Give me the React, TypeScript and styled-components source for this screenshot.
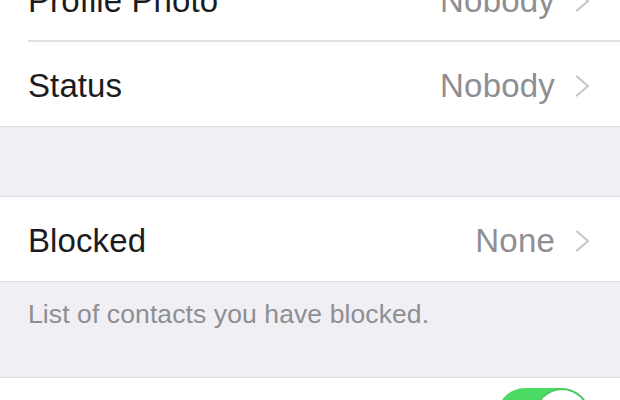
import React from "react";
import styled, { createGlobalStyle } from "styled-components";

const GlobalStyle = createGlobalStyle`
  html, body {
    margin: 0;
    padding: 0;
    background: #efeff4;
    overflow: hidden;
  }
  body {
    font-family: "Liberation Sans", Arial, sans-serif;
    -webkit-font-smoothing: antialiased;
  }
`;

const Screen = styled.div`
  width: 620px;
  height: 400px;
  overflow: hidden;
  background: #efeff4;
`;

const Group = styled.div<{ $first?: boolean }>`
  background: #ffffff;
  margin-top: ${(p) => (p.$first ? "-42px" : "0")};
  border-top: ${(p) => (p.$first ? "none" : "1px solid #dedee2")};
  border-bottom: 1px solid #dedee2;
`;

const Spacer = styled.div<{ $height: number }>`
  height: ${(p) => p.$height}px;
`;

const Row = styled.div<{ $divider?: boolean }>`
  height: 84px;
  display: flex;
  align-items: center;
  margin-left: 28px;
  padding: 3px 30px 0 0;
  border-bottom: ${(p) => (p.$divider ? "2px solid #e3e3e6" : "none")};
  box-sizing: border-box;
`;

const Label = styled.span`
  flex: 1;
  font-size: 33px;
  color: #1c1c1e;
  letter-spacing: 0.1px;
`;

const Value = styled.span`
  font-size: 33px;
  color: #8e8e93;
  letter-spacing: 0.2px;
`;

const Chevron = styled.svg`
  width: 15px;
  height: 22px;
  margin-left: 20px;
  margin-top: 1px;
`;

const Footer = styled.div`
  padding: 17px 0 0 28px;
  height: 95px;
  box-sizing: border-box;
  font-size: 26.5px;
  color: #8e8e93;
  letter-spacing: 0.1px;
`;

const Toggle = styled.div<{ $on: boolean }>`
  margin-left: auto;
  margin-top: 7px;
  align-self: flex-start;
  width: 93px;
  height: 56px;
  border-radius: 28px;
  background: ${(p) => (p.$on ? "#4cd964" : "#e5e5ea")};
  position: relative;
  &::after {
    content: "";
    position: absolute;
    top: 2px;
    left: ${(p) => (p.$on ? "39px" : "2px")};
    width: 52px;
    height: 52px;
    border-radius: 50%;
    background: #ffffff;
    box-shadow: 0 0 0 1px rgba(0, 0, 0, 0.08), 0 2px 5px rgba(0, 0, 0, 0.2);
  }
`;

const Arrow = () => (
  <Chevron viewBox="0 0 15 22">
    <path d="M2 1.5 L13 11 L2 20.5" fill="none" stroke="#c7c7cc" strokeWidth="2.2" strokeLinecap="round" strokeLinejoin="round" />
  </Chevron>
);

const NavRow: React.FC<{ label: string; value: string; divider?: boolean }> = ({ label, value, divider }) => (
  <Row $divider={divider}>
    <Label>{label}</Label>
    <Value>{value}</Value>
    <Arrow />
  </Row>
);

export default function App() {
  return (
    <Screen>
      <GlobalStyle />
      <Group $first>
        <NavRow label="Profile Photo" value="Nobody" divider />
        <NavRow label="Status" value="Nobody" />
      </Group>
      <Spacer $height={69} />
      <Group>
        <NavRow label="Blocked" value="None" />
      </Group>
      <Footer>List of contacts you have blocked.</Footer>
      <Group>
        <Row>
          <Label>Read Receipts</Label>
          <Toggle $on />
        </Row>
      </Group>
    </Screen>
  );
}
